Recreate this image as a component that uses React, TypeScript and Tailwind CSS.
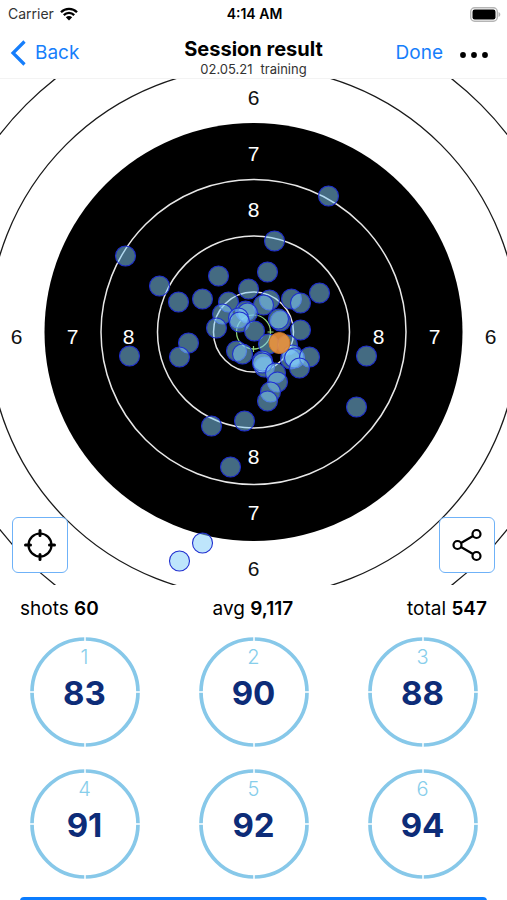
type Point = [number, number];

// Coordinates are relative to the centre of the target.
const shots: Point[] = [
  [75, -136],
  [21, -91],
  [-128, -76],
  [-94, -46],
  [-75, -30],
  [-51, -33],
  [-35, -56],
  [14, -60],
  [-5, -43],
  [-25, -30],
  [-31, -18],
  [-37, -4],
  [16, -32],
  [10, -27],
  [38, -33],
  [47, -29],
  [66, -39],
  [27, -11],
  [25, -13],
  [47, -2],
  [-8, -21],
  [-6, -19],
  [-15, -14],
  [-14, -10],
  [1, -1],
  [15, 12],
  [-17, 19],
  [-11, 22],
  [-65, 11],
  [-74, 25],
  [-124, 24],
  [34, 13],
  [39, 23],
  [37, 27],
  [41, 26],
  [56, 25],
  [46, 36],
  [11, 35],
  [9, 29],
  [9, 31],
  [22, 41],
  [24, 50],
  [17, 60],
  [14, 69],
  [-9, 89],
  [-42, 94],
  [-23, 135],
  [113, 24],
  [103, 75],
  [-51, 211],
  [-74, 229],
];

const labels = [
  { value: 6, offset: 237, fill: "#111111" },
  { value: 7, offset: 181, fill: "#ffffff" },
  { value: 8, offset: 125, fill: "#ffffff" },
];

const series = [83, 90, 88, 91, 92, 94];

function StatusBar() {
  return (
    <div className="grid grid-cols-3 items-center h-7 pl-2 pr-1.5 text-sm">
      <div className="flex items-center gap-1.5 text-[#333]">
        <span>Carrier</span>
        <svg width="18" height="14" viewBox="0 0 18 14" fill="none">
          <path
            d="M1 5.2C5.4 .7 12.6 .7 17 5.2M3.8 8.1c2.9-2.9 7.5-2.9 10.4 0"
            stroke="#000"
            strokeWidth="2.3"
          />
          <path d="M9 13.4 5.8 10.2c1.8-1.6 4.6-1.6 6.4 0Z" fill="#000" />
        </svg>
      </div>
      <span className="text-center font-semibold">4:14 AM</span>
      <svg className="justify-self-end" width="31" height="15" viewBox="0 0 31 15">
        <rect x=".7" y=".7" width="26.6" height="13.6" rx="4" fill="#fff" stroke="#b5b5b5" strokeWidth="1.4" />
        <rect x="2.5" y="2.5" width="23" height="10" rx="2.2" fill="#000" />
        <path d="M28.5 5c2.4.8 2.4 4.2 0 5Z" fill="#b5b5b5" />
      </svg>
    </div>
  );
}

function Header() {
  return (
    <header className="border-b border-[#f3f3f3]">
      <StatusBar />
      <div className="grid grid-cols-[1fr_auto_1fr] items-center h-[50px] px-2.5">
        <button className="flex items-center gap-2 justify-self-start text-[19px] text-[#167efb] cursor-pointer">
          <svg width="17" height="26" viewBox="0 0 17 26" fill="none">
            <path d="M14.5 1.5 3 13l11.5 11.5" stroke="currentColor" strokeWidth="3.2" />
          </svg>
          Back
        </button>
        <div className="pt-2 text-center">
          <h1 className="text-xl leading-6 font-bold">Session result</h1>
          <p className="flex justify-center gap-2 text-[13px] leading-4 text-[#333]">
            <span>02.05.21</span>
            <span>training</span>
          </p>
        </div>
        <div className="flex items-center gap-4 justify-self-end pr-2">
          <button className="text-[19px] text-[#167efb] cursor-pointer">Done</button>
          <button aria-label="More" className="pt-1 cursor-pointer">
            <svg width="30" height="8" viewBox="0 0 30 8">
              <circle cx="4" cy="4" r="2.9" />
              <circle cx="15" cy="4" r="2.9" />
              <circle cx="26" cy="4" r="2.9" />
            </svg>
          </button>
        </div>
      </div>
    </header>
  );
}

function Target() {
  return (
    <svg className="block w-full" viewBox="-253.5 -253 507 506" role="img" aria-label="Target">
      <g fill="none" stroke="#1a1a1a" strokeWidth="1.3">
        <circle r="321.5" />
        <circle r="265" />
      </g>
      <circle r="209" fill="#000" />
      <g fill="none" stroke="#e8e8e8" strokeWidth="1.5">
        <circle r="152.5" />
        <circle r="96" />
        <circle r="40" />
      </g>
      <g fill="none" stroke="#8fd47e" strokeWidth="1.2">
        <circle r="17" />
        <path d="M0 14v6M-3 17h6M17-3v6M14 0h6" />
      </g>

      {labels.map(({ value, offset, fill }) => (
        <g
          key={value}
          fill={fill}
          textAnchor="middle"
          className="font-['Liberation_Sans',sans-serif] text-[21px]"
        >
          <text x="0" y={10 - offset}>{value}</text>
          <text x="0" y={offset + 7}>{value}</text>
          <text x={-offset} y="12">{value}</text>
          <text x={offset} y="12">{value}</text>
        </g>
      ))}

      <g fill="#82cefa" fillOpacity=".52" stroke="#1f2fd0" strokeWidth="1.1">
        {shots.map(([x, y], i) => (
          <circle key={i} cx={x} cy={y} r="10" />
        ))}
      </g>
      <circle cx="26" cy="11" r="10.5" fill="#f0943a" fillOpacity=".88" stroke="#c9762a" />
    </svg>
  );
}

function SeriesRing({ index, score }: { index: number; score: number }) {
  return (
    <div className="grid place-items-center">
      <svg className="col-start-1 row-start-1" width="110" height="110" viewBox="0 0 110 110" fill="none">
        <circle cx="55" cy="55" r="53" stroke="#87c8e9" strokeWidth="3.7" />
        <path d="M55 0v5M55 105v5M0 55h5M105 55h5" stroke="#fff" strokeWidth="1.5" />
      </svg>
      <div className="col-start-1 row-start-1 flex flex-col items-center h-[110px] pt-2">
        <span className="text-xl leading-6 font-light text-[#87ceeb]">{index}</span>
        <span className="text-[33px] leading-[48px] font-bold text-[#0d2c78]">{score}</span>
      </div>
    </div>
  );
}

const toolButton =
  "grid place-items-center size-14 rounded-md border border-[#6fb2f8] bg-white cursor-pointer";

export default function App() {
  return (
    <div className="flex flex-col h-screen overflow-hidden bg-white text-black font-['Inter',sans-serif]">
      <Header />

      <main>
        <section className="relative">
          <Target />
          <div className="absolute inset-x-3 bottom-3 flex justify-between">
            <button aria-label="Aim correction" className={toolButton}>
              <svg width="36" height="36" viewBox="0 0 36 36" fill="none" stroke="#000">
                <circle cx="18" cy="18" r="11.5" strokeWidth="2.2" />
                <path
                  d="M18 3.5v5M18 27.5v5M3.5 18h5M27.5 18h5"
                  strokeWidth="3"
                  strokeLinecap="round"
                />
              </svg>
            </button>
            <button aria-label="Share" className={toolButton}>
              <svg width="36" height="36" viewBox="0 0 36 36" fill="none" stroke="#000" strokeWidth="2.2">
                <circle cx="8.5" cy="18" r="4" />
                <circle cx="27.5" cy="7" r="4" />
                <circle cx="27.5" cy="29" r="4" />
                <path d="M12 16 24 9M12 20l12 7" />
              </svg>
            </button>
          </div>
        </section>

        <section className="flex items-center justify-between h-12 px-5 text-[19px]">
          <p>
            shots <strong className="font-semibold">60</strong>
          </p>
          <p>
            avg <strong className="font-semibold">9,117</strong>
          </p>
          <p>
            total <strong className="font-semibold">547</strong>
          </p>
        </section>

        <section className="grid grid-cols-3 gap-y-[22px] pt-1">
          {series.map((score, i) => (
            <SeriesRing key={i} index={i + 1} score={score} />
          ))}
        </section>

        <div className="px-5 pt-[18px]">
          <button aria-label="Show details" className="block w-full h-12 rounded bg-[#0a7cff] cursor-pointer" />
        </div>
      </main>
    </div>
  );
}
